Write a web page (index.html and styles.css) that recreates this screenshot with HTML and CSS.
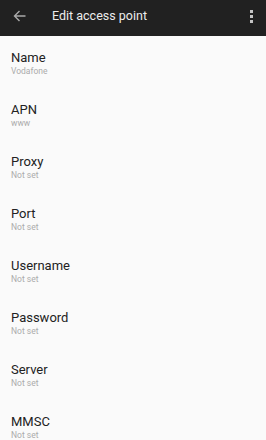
FILE: index.html
```html
<!DOCTYPE html>
<html lang="en">
<head>
    <meta charset="UTF-8">
    <meta name="viewport" content="width=device-width, initial-scale=1.0">
    <title>Edit access point</title>
    <link rel="stylesheet" href="styles.css">
</head>
<body>
    <div class="toolbar">
        <svg class="back-icon" width="13" height="12" viewBox="0 0 13 12">
            <path d="M12.5 6H1.5M6.5 1L1.5 6L6.5 11" fill="none" stroke="#a9a9a9" stroke-width="1.4"/>
        </svg>
        <span class="toolbar-title">Edit access point</span>
        <span class="menu-dots"><i></i><i></i><i></i></span>
    </div>
    <ul class="pref-list">
        <li><span class="pref-title">Name</span><span class="pref-summary">Vodafone</span></li>
        <li><span class="pref-title">APN</span><span class="pref-summary">www</span></li>
        <li><span class="pref-title">Proxy</span><span class="pref-summary">Not set</span></li>
        <li><span class="pref-title">Port</span><span class="pref-summary">Not set</span></li>
        <li><span class="pref-title">Username</span><span class="pref-summary">Not set</span></li>
        <li><span class="pref-title">Password</span><span class="pref-summary">Not set</span></li>
        <li><span class="pref-title">Server</span><span class="pref-summary">Not set</span></li>
        <li><span class="pref-title">MMSC</span><span class="pref-summary">Not set</span></li>
    </ul>
</body>
</html>
```

FILE: styles.css
```css
body {
    margin: 0;
    background-color: #fafafa;
    font-family: Roboto, sans-serif;
    overflow: hidden;
}

.toolbar {
    display: flex;
    align-items: center;
    height: 36px;
    padding-bottom: 4px;
    box-sizing: border-box;
    background-color: #212121;
}

.back-icon {
    margin-left: 13px;
    flex-shrink: 0;
}

.toolbar-title {
    margin-left: 26px;
    font-size: 12.5px;
    line-height: 18px;
    color: #ececec;
}

.menu-dots {
    margin-left: auto;
    margin-right: 13px;
    display: flex;
    flex-direction: column;
    gap: 2px;
}

.menu-dots i {
    display: block;
    width: 3px;
    height: 3px;
    background-color: #c4c4c4;
}

ul.pref-list {
    margin: 0;
    padding: 0;
    list-style: none;
}

.pref-list li {
    display: flex;
    flex-direction: column;
    padding: 14px 10px 11px 11px;
}

.pref-title {
    font-size: 13px;
    line-height: 16px;
    color: #222;
}

.pref-summary {
    font-size: 8.5px;
    line-height: 11px;
    color: #ababab;
}
```
